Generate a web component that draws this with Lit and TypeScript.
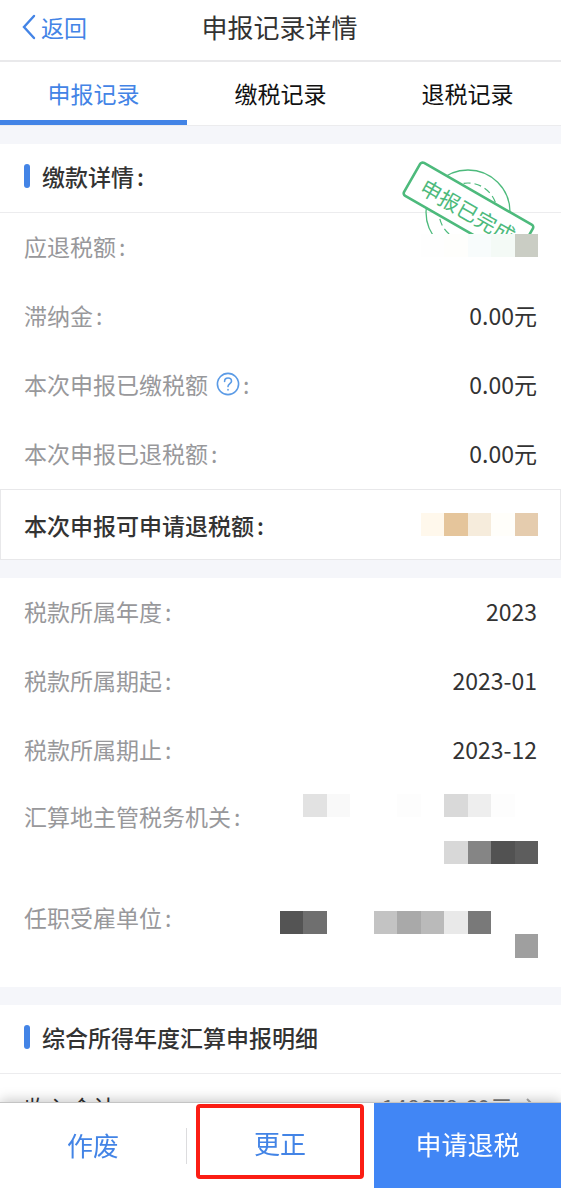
import { LitElement, html, svg, css, nothing } from "lit";
import { customElement, property, state } from "lit/decorators.js";

type Cell = [col: number, row: number, color: string];

interface Entry {
  label: string;
  value?: string;
  help?: boolean;
}

const AMOUNTS: Entry[] = [
  { label: "滞纳金", value: "0.00元" },
  { label: "本次申报已缴税额", value: "0.00元", help: true },
  { label: "本次申报已退税额", value: "0.00元" },
];

const PERIOD: Entry[] = [
  { label: "税款所属年度", value: "2023" },
  { label: "税款所属期起", value: "2023-01" },
  { label: "税款所属期止", value: "2023-12" },
];

const REFUND_CELLS: Cell[] = [
  [6, 0, "#fefefe"], [7, 0, "#fefefc"], [8, 0, "#f8fcfc"], [9, 0, "#f4faf6"], [10, 0, "#cacdc4"],
];
const CLAIM_CELLS: Cell[] = [
  [6, 0, "#fff8ec"], [7, 0, "#e5c59b"], [8, 0, "#f6ecdc"], [9, 0, "#fffefa"], [10, 0, "#e5ccae"],
];
const OFFICE_CELLS: Cell[] = [
  [1, 0, "#e2e2e2"], [2, 0, "#f9f9f9"], [5, 0, "#fdfdfd"], [7, 0, "#d9d9d9"], [8, 0, "#eeeeee"],
  [9, 0, "#fdfdfd"], [7, 2, "#d8d8d8"], [8, 2, "#858585"], [9, 2, "#525252"], [10, 2, "#5d5d5d"],
];
const EMPLOYER_CELLS: Cell[] = [
  [0, 0, "#545454"], [1, 0, "#6f6f6f"], [4, 0, "#c3c3c3"], [5, 0, "#a9a9a9"], [6, 0, "#bababa"],
  [7, 0, "#e9e9e9"], [8, 0, "#797979"], [10, 1, "#9f9f9f"],
];

@customElement("masked-value")
class MaskedValue extends LitElement {
  @property({ attribute: false }) cells: Cell[] = [];
  @property({ type: Number }) rows = 1;

  static styles = css`
    :host { display: block; width: 258px; margin-right: -1px; }
    .mosaic { display: block; width: 100%; }
  `;

  render() {
    return html`<svg class="mosaic" viewBox="0 0 11 ${this.rows}" shape-rendering="crispEdges" aria-hidden="true">
      ${this.cells.map(([x, y, c]) => svg`<rect x=${x} y=${y} width="1" height="1" fill=${c} />`)}
    </svg>`;
  }
}

@customElement("done-stamp")
class DoneStamp extends LitElement {
  static styles = css`
    :host { display: block; }
    .stamp { display: block; width: 144px; height: 96px; }
    .word { font: 400 21px "Noto Sans CJK SC", sans-serif; fill: #4dba7c; }
  `;

  render() {
    return html`<svg class="stamp" viewBox="396 155 144 96" role="img" aria-label="申报已完成">
      <g fill="none" stroke="#4dba7c">
        <circle cx="468" cy="212" r="42" stroke-width="1.3" />
        <circle cx="468" cy="212" r="29" stroke-width="1.2" stroke-dasharray="7 4" />
        <rect x="0" y="0" width="130" height="38" rx="3" fill="#fff" stroke-width="2.6"
          transform="translate(421.5 161.5) rotate(29.8)" />
      </g>
      <text class="word" text-anchor="middle" transform="translate(467 211) rotate(29.8)" x="1" y="8">申报已完成</text>
    </svg>`;
  }
}

@customElement("app-root")
class AppRoot extends LitElement {
  @state() private tab = 0;

  static styles = css`
    :host {
      display: flex;
      flex-direction: column;
      height: 100vh;
      overflow: hidden;
      background: #fff;
      color: #333;
      font: 400 23px/34px "Noto Sans CJK SC", sans-serif;
    }
    button { font: inherit; color: inherit; background: none; border: 0; padding: 0; margin: 0; cursor: pointer; }
    h1, h2, dl, dd { margin: 0; font-weight: 400; }

    .bar {
      display: grid;
      grid-template-columns: 1fr auto 1fr;
      align-items: center;
      padding: 8px 24px 14px 22px;
      border-bottom: 2px solid #e9e9eb;
    }
    .back { display: flex; align-items: center; gap: 5px; color: #4384e6; text-decoration: none; }
    .back-icon { width: 14px; height: 26px; }
    .title { font-size: 26px; line-height: 38px; }

    .tabs { display: grid; grid-template-columns: repeat(3, 1fr); border-bottom: 1px solid #ececee; }
    .tab { padding: 14px 0 10px; border-bottom: 5px solid transparent; color: #111; }
    .tab.on { color: #4384e6; border-color: #4384e6; }

    .body { flex: 1; min-height: 0; overflow-y: auto; scrollbar-width: none; background: #f5f6fa; padding-top: 18px; }
    .card { position: relative; background: #fff; margin-bottom: 18px; }
    .head {
      display: flex;
      align-items: center;
      gap: 12px;
      height: 69px;
      padding: 0 24px 4px;
      border-bottom: 1px solid #ececee;
      box-sizing: border-box;
      font-size: 23px;
      font-weight: 500;
    }
    .head::before { content: ""; width: 6px; height: 24px; border-radius: 3px; background: #4384e6; }
    .stamp { position: absolute; top: 11px; right: 21px; }

    .row {
      position: relative;
      display: flex;
      justify-content: space-between;
      align-items: center;
      min-height: 69px;
      padding: 0 24px 4px;
      box-sizing: border-box;
    }
    .row.tall { align-items: flex-start; min-height: 101px; padding-top: 14px; }
    .label { display: flex; align-items: center; color: #98989b; }
    .colon { padding-left: 3px; }
    .row.claim { min-height: 71px; border: 1px solid #e8e8ea; padding: 0 23px; }
    .row.claim .label, .row.total .label { color: #333; }
    .row.claim .label { font-weight: 500; }
    .row.tall .office { margin-top: -5px; }
    .row.tall .employer { margin-top: 11px; }
    .amount { display: flex; align-items: center; gap: 12px; color: #777; }
    .more { width: 12px; height: 20px; }
    .help { display: flex; margin-left: 8px; }
    .help-icon { width: 24px; height: 24px; }

    .actions {
      position: relative;
      z-index: 1;
      display: grid;
      grid-template-columns: repeat(3, 1fr);
      align-items: center;
      padding-bottom: 3px;
      border-top: 1px solid #c4c4c4;
      background: #fff;
      box-shadow: 0 -2px 12px rgba(0, 0, 0, 0.22);
      color: #4384e6;
      font-size: 26px;
    }
    .action { height: 85px; padding-bottom: 4px; }
    .action.void { height: 36px; border-right: 1px solid #dcdcde; }
    .action.fix {
      align-self: start;
      height: 75px;
      margin: 1px 10px 0 9px;
      padding: 3px 0 0;
      border: 4px solid #fb1d14;
      border-radius: 4px;
    }
    .apply { background: #4186f5; color: #fff; }
  `;

  private colon = html`<span class="colon">:</span>`;

  private row(e: Entry) {
    return html`<div class="row">
      <dt class="label">${e.label}${e.help
        ? html`<button class="help" aria-label="说明"><svg class="help-icon" viewBox="0 0 24 24" fill="none" stroke="#5b9be6" stroke-width="1.6" stroke-linecap="round">
            <circle cx="12" cy="12" r="10.6" />
            <path d="M8.6 9.4C8.6 7.3 10 6 12 6s3.5 1.3 3.5 3.2c0 2.4-3.5 2.7-3.5 5.4M12 17.6v.4" />
          </svg></button>`
        : nothing}${this.colon}</dt>
      <dd>${e.value}</dd>
    </div>`;
  }

  render() {
    return html`
      <header class="bar">
        <a class="back" href="#"><svg class="back-icon" viewBox="0 0 14 26" fill="none" stroke="#4384e6" stroke-width="2.4" stroke-linecap="round"><path d="M12 2 2 13l10 11" /></svg>返回</a>
        <h1 class="title">申报记录详情</h1>
      </header>
      <nav class="tabs">
        ${["申报记录", "缴税记录", "退税记录"].map((t, i) => html`<button
          class="tab ${i === this.tab ? "on" : ""}" @click=${() => (this.tab = i)}>${t}</button>`)}
      </nav>
      <main class="body">
        <section class="card">
          <h2 class="head"><span>缴款详情${this.colon}</span></h2>
          <done-stamp class="stamp"></done-stamp>
          <dl>
            <div class="row"><dt class="label">应退税额${this.colon}</dt><dd><masked-value .cells=${REFUND_CELLS}></masked-value></dd></div>
            ${AMOUNTS.map((e) => this.row(e))}
            <div class="row claim"><dt class="label">本次申报可申请退税额${this.colon}</dt><dd><masked-value .cells=${CLAIM_CELLS}></masked-value></dd></div>
          </dl>
        </section>
        <section class="card">
          <dl>
            ${PERIOD.map((e) => this.row(e))}
            <div class="row tall"><dt class="label">汇算地主管税务机关${this.colon}</dt><dd class="office"><masked-value .cells=${OFFICE_CELLS} rows="3"></masked-value></dd></div>
            <div class="row tall"><dt class="label">任职受雇单位${this.colon}</dt><dd class="employer"><masked-value .cells=${EMPLOYER_CELLS} rows="2"></masked-value></dd></div>
          </dl>
        </section>
        <section class="card">
          <h2 class="head">综合所得年度汇算申报明细</h2>
          <dl>
            <div class="row total"><dt class="label">收入合计</dt><dd class="amount">148678.60元<svg class="more" viewBox="0 0 12 20" fill="none" stroke="#aaa" stroke-width="2"><path d="m2 2 8 8-8 8" /></svg></dd></div>
          </dl>
        </section>
      </main>
      <footer class="actions">
        <button class="action void">作废</button>
        <button class="action fix">更正</button>
        <button class="action apply">申请退税</button>
      </footer>
    `;
  }
}
